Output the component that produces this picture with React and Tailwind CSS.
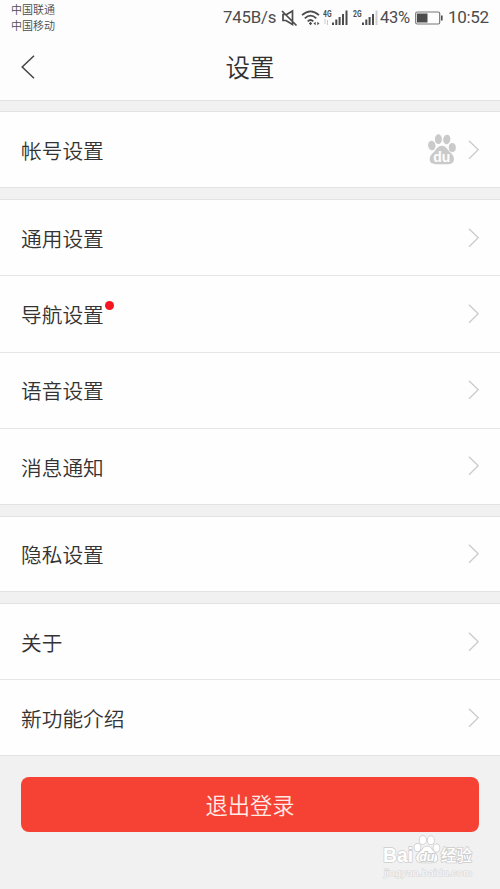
const groups = [
  { box: 'h-[77px]', rows: [{ label: '帐号设置', paw: true }] },
  { box: 'h-[306px]', rows: [{ label: '通用设置' }, { label: '导航设置', dot: true }, { label: '语音设置' }, { label: '消息通知' }] },
  { box: 'h-[76px]', rows: [{ label: '隐私设置' }] },
  { box: 'h-[153px]', rows: [{ label: '关于' }, { label: '新功能介绍' }] },
];

function Paw({ className }) {
  return (
    <svg viewBox="0 0 28 31" className={className}>
      <ellipse cx="3.8" cy="11.6" rx="3.7" ry="4.8" transform="rotate(-8 3.8 11.6)" />
      <ellipse cx="10.4" cy="5.2" rx="3.5" ry="4.9" />
      <ellipse cx="18.8" cy="5.4" rx="3.6" ry="4.8" transform="rotate(10 18.8 5.4)" />
      <ellipse cx="24.3" cy="13.5" rx="3.5" ry="4.6" />
      <path d="M13.8 11.8c3.8 0 5.4 3.2 7.4 5.5 2.6 2.4 5 4.7 4.7 8.3-.3 3.8-3.2 4.8-6.4 4.6H8.1c-3.2.2-6.2-.9-6.4-4.6-.2-3.6 2.6-5.9 4.8-8.3 1.9-2.3 3.5-5.5 7.3-5.5z" />
      <text x="13.8" y="27.5" textAnchor="middle" fontSize="14" className="fill-[#fdfdfd] font-['Liberation_Sans'] font-bold">du</text>
    </svg>
  );
}

function Chevron() {
  return (
    <svg viewBox="0 0 12 20" className="h-5 w-3 fill-none stroke-[#cbcbcb]" strokeWidth="1.3">
      <path d="M1 .7 10.2 9.7 1 18.7" />
    </svg>
  );
}

function Signal({ label, className, faded }) {
  return (
    <svg viewBox="0 0 26 18" className={className} fill="#4c4c4c">
      <text x="0" y="7.5" fontSize="8.5" textLength="8.5" lengthAdjust="spacingAndGlyphs" className="font-['Roboto'] font-bold">{label}</text>
      {faded && <path d="M1.5 10h1v5h-1zM4 11h1v5H4z" fill="#c9c9c9" />}
      <path d="M9 13.5h2V16H9zM12.3 10.500h2V16h-2zM15.6 8h2v8h-2zM19 5h2v11h-2z" />
      <path d="M22.5 1.5h2V16h-2z" fill={faded ? '#4c4c4c' : '#cfcfcf'} />
    </svg>
  );
}

function StatusBar() {
  return (
    <div className="flex h-9 justify-between px-[11px] text-[#4c4c4c]">
      <div className="pt-[2px] text-[11px] leading-[15.5px]">
        <div>中国联通</div>
        <div>中国移动</div>
      </div>
      <div className="flex h-[35px] items-center font-['Roboto'] text-[17px] font-normal whitespace-nowrap">
        <span className="w-[54px] text-[16.8px] tracking-[-0.2px]">745B/s</span>
        <svg viewBox="0 0 17 18" className="ml-[4px] h-[18px] w-[17px] fill-none stroke-[#4c4c4c]" strokeWidth="1.7">
          <path d="M5.5 5.5H2v6h3l6.5 4V2L5.5 5.5M1 2l14.5 14.5" />
        </svg>
        <svg viewBox="0 0 20 18" className="ml-[3px] h-[18px] w-[20px] fill-none stroke-[#4c4c4c]" strokeWidth="1.8">
          <path d="M1 6.2Q9.5-1.5 18 6.2M3.8 9.3Q9.5 4 15.3 9.3M6.7 12.3Q9.5 9.7 12.3 12.3" />
          <path d="m9.5 12.8 1.7 1.7-1.7 1.7-1.7-1.7zM12.5 14.5l2.2-1.7v3.4zM18.5 14.5l-2.2-1.7v3.4z" fill="#4c4c4c" stroke="none" />
        </svg>
        <Signal label="4G" className="ml-[2px] h-[18px] w-[26px]" faded />
        <Signal label="2G" className="ml-[4px] h-[18px] w-[26px]" />
        <span className="ml-[1px] w-[31px] pt-px text-[16.5px] tracking-[-0.3px]">43%</span>
        <svg viewBox="0 0 28 14" className="ml-[4px] h-[14px] w-[28px]">
          <rect x="0.7" y="1" width="24" height="12" rx="1.5" className="fill-none stroke-[#777]" strokeWidth="1.2" />
          <path d="M2 2.5h10.500v9H2zM26 4.500h1.600v5H26z" fill="#4c4c4c" />
        </svg>
        <span className="ml-[5px] w-[41px] text-[17px] tracking-[-0.3px]">10:52</span>
      </div>
    </div>
  );
}

function Row({ label, paw, dot }) {
  return (
    <div className="flex flex-1 items-center justify-between pr-5 pl-[21px] text-[20.7px] text-[#333]">
      <span className="relative pt-px leading-none">
        {label}
        {dot && <i className="absolute -top-[2px] -right-[10px] size-[9px] rounded-full bg-[#f51420]" />}
      </span>
      <div className="flex items-center gap-[12px]">
        {paw && <Paw className="h-[31px] w-[28px] fill-[#cacaca]" />}
        <Chevron />
      </div>
    </div>
  );
}

function Watermark() {
  return (
    <div className="ml-[382px] flex w-[92px] flex-col">
      <svg viewBox="0 0 92 32" className="h-[32px] w-[92px] stroke-[#cccccc]" fill="#fff" strokeWidth="1.4" paintOrder="stroke">
        <text x="1" y="27" fontSize="19.5" textLength="30" lengthAdjust="spacingAndGlyphs" className="font-['Liberation_Sans'] font-bold">Bai</text>
        <g strokeWidth="1.6">
          <ellipse cx="35.5" cy="12.5" rx="3" ry="3.8" />
          <ellipse cx="40.8" cy="5" rx="3.2" ry="4" />
          <ellipse cx="48.8" cy="5.3" rx="3.2" ry="4" />
          <ellipse cx="54.5" cy="13" rx="3" ry="3.8" />
          <path d="M45 11.5c4 0 5 3.5 8 6.5s4 9.5-3 9.500H40c-7 0-7-6.500-3-9.500s4-6.500 8-6.500z" />
        </g>
        <text x="44.8" y="25.5" textAnchor="middle" fontSize="12.5" strokeWidth="2" className="font-['Liberation_Sans'] font-bold italic">du</text>
        <text x="59" y="26" fontSize="15.5" strokeWidth="1.6" className="font-medium">经验</text>
      </svg>
      <svg viewBox="0 0 92 14" className="h-[14px] w-[92px] fill-[#f8f8f8] stroke-[#dadada]" strokeWidth="1.2" paintOrder="stroke">
        <text x="2" y="9" fontSize="9.5" textLength="88" lengthAdjust="spacingAndGlyphs" className="font-['Liberation_Sans']">jingyan.baidu.com</text>
      </svg>
    </div>
  );
}

export default function App() {
  return (
    <div className="flex h-[889px] w-[500px] flex-col overflow-hidden bg-[#f1f1f1] font-['Noto_Sans_CJK_SC',sans-serif] font-[350]">
      <header className="h-[101px] border-b border-[#e3e3e3] bg-[#fdfdfd]">
        <StatusBar />
        <div className="flex h-[62px] items-center px-[21px]">
          <svg viewBox="0 0 14 24" className="h-6 w-3.5 fill-none stroke-[#444]" strokeWidth="1.5">
            <path d="M13 .7 1.2 12 13 23.3" />
          </svg>
          <h1 className="flex-1 pt-px pr-3.5 text-center text-[24.5px] leading-none font-[350] text-[#303030]">设置</h1>
        </div>
      </header>
      <main className="flex flex-col gap-[11px] pt-[10px]">
        {groups.map((g) => (
          <section key={g.rows[0].label} className={`${g.box} flex flex-col divide-y divide-[#e6e6e6] border-y border-[#e3e3e3] bg-[#fefefe]`}>
            {g.rows.map((row) => <Row key={row.label} {...row} />)}
          </section>
        ))}
      </main>
      <button className="mx-[21px] mt-[21px] h-[55px] shrink-0 rounded-lg bg-[#f64234] text-[22.3px] text-[#ffeae5]">退出登录</button>
      <div className="mt-[3px]">
        <Watermark />
      </div>
    </div>
  );
}
